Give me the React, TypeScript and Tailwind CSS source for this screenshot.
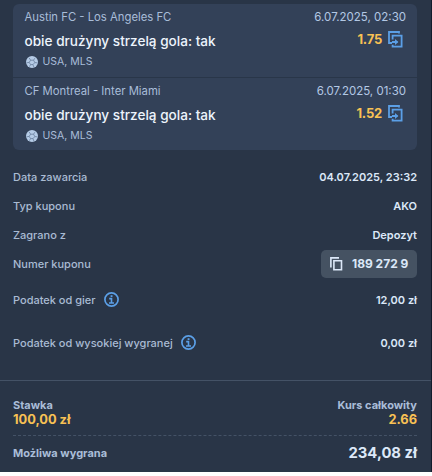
import type { ReactNode } from "react";

type Bet = {
    id: number;
    match: string;
    date: string;
    pick: string;
    odds: string;
    league: string;
};

const bets: Bet[] = [
    {
        id: 1,
        match: "Austin FC - Los Angeles FC",
        date: "6.07.2025, 02:30",
        pick: "obie drużyny strzelą gola: tak",
        odds: "1.75",
        league: "USA, MLS",
    },
    {
        id: 2,
        match: "CF Montreal - Inter Miami",
        date: "6.07.2025, 01:30",
        pick: "obie drużyny strzelą gola: tak",
        odds: "1.52",
        league: "USA, MLS",
    },
];

function BallIcon() {
    return (
        <svg width="12" height="12" viewBox="0 0 12 12" fill="none">
            <circle cx="6" cy="6" r="6" fill="#b5cbe6" />
            <path
                d="M4.6 4.2h3L8.8 6.6 7 8.6H4.6L3.2 6.4ZM4.6 4.2 3.2 2M7.6 4.2l1.2-2M8.8 6.6l2.6.2M7 8.6l.8 2.4M4.6 8.6 3.4 10.6M3.2 6.4.6 6.8"
                stroke="#607694"
                strokeWidth="0.7"
            />
        </svg>
    );
}

function TransferIcon() {
    return (
        <svg
            width="15"
            height="17"
            viewBox="0 0 15 17"
            fill="none"
            stroke="#5b9fe6"
            strokeWidth="1.8"
        >
            <path d="M11 2.4V1H1v11h3" />
            <path d="M4.6 8.4V4.6H13.6V15.6H4.6v-1.8" />
            <path d="M4 11h5.5" />
            <path d="M7 8 10.4 11 7 14Z" fill="#5b9fe6" stroke="none" />
        </svg>
    );
}

function CopyIcon() {
    return (
        <svg
            width="13"
            height="14"
            viewBox="0 0 13 14"
            fill="none"
            stroke="#dce8f8"
            strokeWidth="1.6"
        >
            <path d="M9 .9H.9v9.6" />
            <path d="M3.9 3.7h7.6v9.1H3.9Z" />
        </svg>
    );
}

function InfoIcon() {
    return (
        <svg width="15" height="15" viewBox="0 0 15 15" fill="none">
            <circle cx="7.5" cy="7.5" r="6.6" stroke="#5b9fe6" strokeWidth="1.7" />
            <path d="M6.6 3.2h1.9v1.8H6.6Z" fill="#5b9fe6" />
            <path
                d="M5.2 6.6h2.3V11M5 11h5"
                stroke="#5b9fe6"
                strokeWidth="1.6"
            />
        </svg>
    );
}

function BetRow({ bet }: { bet: Bet }) {
    return (
        <div className="flex h-[73px] justify-between pl-[11.5px] pr-[11px]">
            <div>
                <div className="mt-[5px] text-[11.3px] leading-4 text-[#a9bdd8]">
                    {bet.match}
                </div>
                <div className="mt-[6px] text-[13.6px] leading-5 font-medium text-[#edf4fd]">
                    {bet.pick}
                </div>
                <div className="mt-[3px] flex items-center gap-[5px] pl-px text-[10.5px] leading-4 text-[#a9bdd8]">
                    <BallIcon />
                    {bet.league}
                </div>
            </div>
            <div className="flex flex-col items-end">
                <div className="mt-[5px] text-[11.5px] leading-4 text-[#b3c8e4]">
                    {bet.date}
                </div>
                <div className="mt-[4px] mr-[3px] flex items-center gap-[6px] text-[13px] leading-5 font-bold tracking-[-0.2px] text-[#f8c154]">
                    {bet.odds}
                    <TransferIcon />
                </div>
            </div>
        </div>
    );
}

function DetailRow({ label, info, children }: { label: string; info?: boolean; children: ReactNode }) {
    return (
        <div className="flex h-[29px] items-center justify-between">
            <div className="flex items-center gap-2 font-medium text-[#a9bbd3]">
                {label}
                {info && <InfoIcon />}
            </div>
            <div className="font-semibold text-[#dce8f8]">{children}</div>
        </div>
    );
}

export default function App() {
    return (
        <div className="h-[476px] w-[432px] bg-white font-['Inter',sans-serif]">
            <div className="h-[472px] border-r border-[#121d2c] bg-[#293547] pt-1">
                <div className="mx-[13px] h-[146px] w-[404px] overflow-hidden rounded-[6px] bg-[#334158]">
                    {bets.map((bet, index) => (
                        <div
                            key={bet.id}
                            className={index > 0 ? "h-[74px] border-t border-[#293649]" : "h-[73px]"}
                        >
                            <BetRow bet={bet} />
                        </div>
                    ))}
                </div>

                <div className="mt-[12px] ml-[13px] w-[404px] text-[11px] leading-4">
                    <DetailRow label="Data zawarcia">04.07.2025, 23:32</DetailRow>
                    <DetailRow label="Typ kuponu">AKO</DetailRow>
                    <DetailRow label="Zagrano z">Depozyt</DetailRow>
                    <DetailRow label="Numer kuponu">
                        <div className="flex h-7 w-24 items-center gap-[9px] rounded-[5px] bg-[#455262] pl-[9px] text-[12px] font-bold">
                            <CopyIcon />
                            189 272 9
                        </div>
                    </DetailRow>
                    <div className="mt-[7px]">
                        <DetailRow label="Podatek od gier" info>12,00 zł</DetailRow>
                    </div>
                    <div className="mt-[14px]">
                        <DetailRow label="Podatek od wysokiej wygranej" info>0,00 zł</DetailRow>
                    </div>
                </div>

                <div className="mt-[23px] border-t border-[#445266] pt-[17px]">
                    <div className="ml-[13px] w-[404px]">
                        <div className="flex justify-between text-[11px] leading-[14px] font-bold text-[#a9bdd8]">
                            <span>Stawka</span>
                            <span>Kurs całkowity</span>
                        </div>
                        <div className="flex h-[23px] justify-between text-[12.8px] leading-[15px] font-bold text-[#f8c154]">
                            <span>100,00 zł</span>
                            <span>2.66</span>
                        </div>
                        <div className="flex h-[36px] items-center justify-between border-t border-dashed border-[#445266]">
                            <span className="text-[11px] font-bold text-[#a9bdd8]">
                                Możliwa wygrana
                            </span>
                            <span className="text-[14.8px] font-bold text-[#dce8f8]">
                                234,08 zł
                            </span>
                        </div>
                    </div>
                </div>
            </div>
        </div>
    );
}
